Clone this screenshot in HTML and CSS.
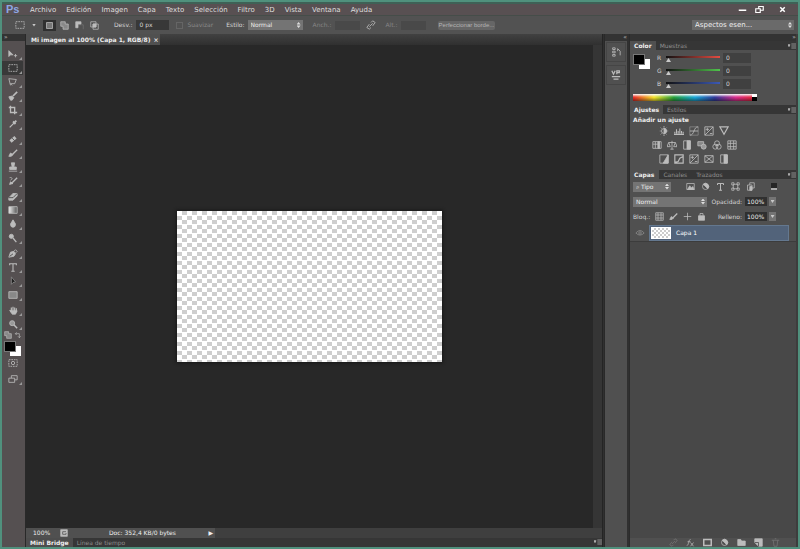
FILE: index.html
```html
<!DOCTYPE html>
<html lang="es">
<head>
<meta charset="utf-8">
<title>Mi imagen</title>
<link rel="stylesheet" href="styles.css">
</head>
<body>
<svg class="defs" aria-hidden="true">
  <symbol id="move" viewBox="0 0 12 12"><path class="f" d="M1 2v7l2-2h3z"/><path d="M7 8h4M9 6v4"/></symbol>
  <symbol id="marquee" viewBox="0 0 12 12"><path d="M1 2h10v8H1z" stroke-dasharray="2 1"/></symbol>
  <symbol id="lasso" viewBox="0 0 12 12"><path d="M3 10L1 2l9 1-2 5H3l2 2"/></symbol>
  <symbol id="wand" viewBox="0 0 12 12"><path d="M11 1L6 6" stroke-width="2"/><path class="f" d="M1 7l4-1 2 2-2 3H3z"/></symbol>
  <symbol id="crop" viewBox="0 0 12 12"><path d="M3 1v8h8M1 3h7v8" stroke-width="1.6"/></symbol>
  <symbol id="dropper" viewBox="0 0 12 12"><path d="M2 10l6-6" stroke-width="1.5"/><path d="M6 3l3 3M8 4l2-2" stroke-width="2.2"/></symbol>
  <symbol id="heal" viewBox="0 0 12 12"><path d="M3 9l6-5" stroke-width="4"/><path class="k" d="M5 5l3 3"/></symbol>
  <symbol id="brush" viewBox="0 0 12 12"><path d="M11 2L5 8" stroke-width="1.6"/><path class="f" d="M1 10l2-4 3 2-2 2z"/></symbol>
  <symbol id="stamp" viewBox="0 0 12 12"><path class="f" d="M4 1h4L7 6h3v3H2V6h3z"/><path d="M1 11h10"/></symbol>
  <symbol id="history" viewBox="0 0 12 12"><path d="M11 2L5 8" stroke-width="1.6"/><path d="M2 2c3-1 4 2 1 3M2 10l3-2"/><path class="f" d="M2 10l1-3 3 2z"/></symbol>
  <symbol id="eraser" viewBox="0 0 12 12"><path class="f" d="M1 8l5-5h5v3l-5 5H1z"/><path class="k" d="M1 8h5l5-5"/></symbol>
  <symbol id="gradient" viewBox="0 0 12 12"><path fill="url(#fade)" d="M1 2h10v8H1z"/></symbol>
  <linearGradient id="fade"><stop offset="0" stop-color="#eee"/><stop offset="1" stop-color="#555"/></linearGradient>
  <symbol id="drop" viewBox="0 0 12 12"><path class="f" d="M6 1l3 5a3 4 0 1 1-6 0z"/></symbol>
  <symbol id="dodge" viewBox="0 0 12 12"><circle class="f" cx="4" cy="4" r="2.5"/><path d="M6 6l4 5" stroke-width="1.5"/></symbol>
  <symbol id="pen" viewBox="0 0 12 12"><path class="f" d="M1 11l2-6 4-1 2 3-2 3z"/><path d="M7 4l2-2 2 2-2 2"/><path class="k" d="M2 10l4-3"/></symbol>
  <symbol id="type" viewBox="0 0 12 12"><path d="M2 4V2h8v2M6 2v9M4 11h4" stroke-width="1.3"/></symbol>
  <symbol id="arrow" viewBox="0 0 12 12"><path class="dark" d="M4 1v9l2-2 3-1z"/></symbol>
  <symbol id="rect" viewBox="0 0 12 12"><path d="M1 2h10v8H1z" fill="#888"/></symbol>
  <symbol id="hand" viewBox="0 0 12 12"><path d="M4 8V3M6 8V2M8 8V3M10 8V4M2 6l2 3" stroke-width="1.4"/><path class="f" d="M3 7h8l-2 4H5z"/></symbol>
  <symbol id="zoom" viewBox="0 0 12 12"><circle cx="5" cy="5" r="3" fill="#999"/><path d="M7 7l4 4" stroke-width="1.8"/></symbol>
  <symbol id="mask" viewBox="0 0 12 12"><path d="M1 2h10v8H1z" stroke-dasharray="2 1"/><circle cx="6" cy="6" r="2"/></symbol>
  <symbol id="screen" viewBox="0 0 12 12"><path d="M1 5h7v5H1zM4 5V2h7v5H8"/></symbol>
  <symbol id="swap" viewBox="0 0 12 12"><path d="M2 4h6v6M4 2L2 4l2 2M6 8l2 2 2-2"/></symbol>
  <symbol id="square" viewBox="0 0 12 12"><path d="M2 2h8v8H2z" fill="#777"/></symbol>
  <symbol id="unite" viewBox="0 0 12 12"><path fill="#888" d="M1 1h6v3h4v7H4V7H1z"/></symbol>
  <symbol id="subtract" viewBox="0 0 12 12"><path class="f" d="M1 1h7v3H4v5H1z"/><path d="M5 5h6v6" opacity=".3"/></symbol>
  <symbol id="intersect" viewBox="0 0 12 12"><path d="M1 1h7v7H1zM4 4h7v7H4z"/><path class="f" d="M4 4h4v4H4z"/></symbol>
  <symbol id="link" viewBox="0 0 12 12"><path d="M6 3l2-2 3 2-3 4M6 9l-2 2-3-2 3-4M4 8l4-4"/></symbol>
  <symbol id="steps" viewBox="0 0 12 12"><path d="M2 1h3v2H2zM2 5h3v2H2zM2 9h3v2H2zM8 2l3 3v5M8 2v3"/></symbol>
  <symbol id="props" viewBox="0 0 12 12"><path d="M1 1l2 4 2-4M7 5V1h3v2H7M1 8h10M3 11h6" stroke-width="1.5"/></symbol>
  <symbol id="sun" viewBox="0 0 12 12"><circle cx="6" cy="6" r="3"/><path class="f" d="M6 3a3 3 0 0 1 0 6z"/><path d="M6 0v2M6 10v2M1 6h1M10 6h1M2 2l1 1M9 2L8 3M2 10l1-1M9 10L8 9"/></symbol>
  <symbol id="levels" viewBox="0 0 12 12"><path d="M0 10h12M1 9V7M3 9V4M5 9V6M7 9V3M9 9V6M11 9V7" stroke-width="1.3"/></symbol>
  <symbol id="curves" viewBox="0 0 12 12"><path d="M1 1h10v10H1z" opacity=".5"/><path d="M1 11C7 11 5 1 11 1M1 6h10"/></symbol>
  <symbol id="exposure" viewBox="0 0 12 12"><path d="M1 1h10v10H1zM1 11L11 1M2 4h4M4 2v4M7 9h3"/></symbol>
  <symbol id="triangle" viewBox="0 0 12 12"><path d="M1 1h10L6 10z" stroke-width="1.4"/></symbol>
  <symbol id="hue" viewBox="0 0 12 12"><path d="M1 2h10v8H1zM4 2v8M1 5h6"/><path class="f" d="M7 2h2v8H7z"/></symbol>
  <symbol id="balance" viewBox="0 0 12 12"><path d="M2 3h8M6 1v10M2 3L0 8h4zM10 3L8 8h4zM4 11h4"/></symbol>
  <symbol id="bw" viewBox="0 0 12 12"><path d="M2 1h8v10H2z"/><path class="f" d="M6 1h4v10H6z"/></symbol>
  <symbol id="filter" viewBox="0 0 12 12"><path d="M1 2h7v5H1z" fill="#888"/><circle cx="8" cy="8" r="3" fill="#999"/></symbol>
  <symbol id="mixer" viewBox="0 0 12 12"><circle cx="6" cy="4" r="3"/><circle cx="4" cy="8" r="3"/><circle cx="8" cy="8" r="3"/></symbol>
  <symbol id="grid" viewBox="0 0 12 12"><path d="M1 1h10v10H1zM4 1v10M8 1v10M1 4h10M1 8h10"/></symbol>
  <symbol id="diag" viewBox="0 0 12 12"><path d="M1 1h10v10H1z"/><path class="f" d="M11 1v10H5z"/></symbol>
  <symbol id="poster" viewBox="0 0 12 12"><path d="M1 1h10v10H1zM1 10l4-1 2-4 4-2" stroke-width="1.4"/></symbol>
  <symbol id="cross" viewBox="0 0 12 12"><path d="M1 2h10v8H1zM1 2l10 8M1 10l10-8"/></symbol>
  <symbol id="pic" viewBox="0 0 12 12"><path d="M1 2h10v8H1z"/><path class="f" d="M2 10l3-5 2 3 2-2 2 4z"/></symbol>
  <symbol id="half" viewBox="0 0 12 12"><circle cx="6" cy="6" r="4"/><path class="f" d="M3 3l6 6a4 4 0 0 0-6-6z"/></symbol>
  <symbol id="shape" viewBox="0 0 12 12"><path d="M3 3h6v6H3zM1 1h3v3H1zM8 1h3v3H8zM1 8h3v3H1zM8 8h3v3H8z"/></symbol>
  <symbol id="page" viewBox="0 0 12 12"><path d="M2 4h6v7H2zM5 4V1h6v7H8"/><path class="f" d="M5 6h3v5H5z"/></symbol>
  <symbol id="lock" viewBox="0 0 12 12"><path class="f" d="M2 5h8v6H2z"/><path d="M4 5V2h4v3"/></symbol>
  <symbol id="eye" viewBox="0 0 12 12"><path d="M1 6q5-6 10 0-5 5-10 0"/><circle cx="6" cy="6" r="1.5"/></symbol>
  <symbol id="fx" viewBox="0 0 12 12"><path d="M1 10c3 0 2-8 5-8M2 5h4M6 6l4 5M10 6l-4 5"/></symbol>
  <symbol id="addmask" viewBox="0 0 12 12"><path d="M1 2h10v8H1z" stroke-width="2"/></symbol>
  <symbol id="folder" viewBox="0 0 12 12"><path class="f" d="M1 2h4l1 2h5v6H1z"/></symbol>
  <symbol id="new" viewBox="0 0 12 12"><path class="f" d="M1 1h10v10H6L1 6z"/><path class="k" d="M1 6h5v5"/></symbol>
  <symbol id="trash" viewBox="0 0 12 12"><path d="M1 3h10M3 3l1 8h4l1-8M5 1h2"/></symbol>
  <symbol id="menu" viewBox="0 0 12 12"><path class="f" d="M0 4h3L1.500 7z"/><path d="M5 3h7M5 6h7M5 9h7"/></symbol>
</svg>

<div class="app">
  <header class="menubar">
    <span class="logo">Ps</span>
    <nav class="menus">
      <button>Archivo</button><button>Edición</button><button>Imagen</button><button>Capa</button><button>Texto</button><button>Selección</button><button>Filtro</button><button>3D</button><button>Vista</button><button>Ventana</button><button>Ayuda</button>
    </nav>
    <div class="window-buttons">
      <button aria-label="Minimizar"><svg viewBox="0 0 12 12"><path d="M1 7h10" stroke-width="2"/></svg></button>
      <button aria-label="Restaurar"><svg viewBox="0 0 12 12"><path d="M1 5h6v5H1zM5 5V2h6v5H7" stroke-width="1.5"/></svg></button>
      <button aria-label="Cerrar"><svg viewBox="0 0 12 12"><path d="M3 3l6 6M9 3l-6 6" stroke-width="2"/></svg></button>
    </div>
  </header>

  <div class="options">
    <button class="preset" aria-label="Marco"><svg><use href="#marquee"/></svg><i class="caret"></i></button>
    <div class="modes">
      <button class="on" aria-label="Nueva"><svg><use href="#square"/></svg></button>
      <button aria-label="Añadir"><svg><use href="#unite"/></svg></button>
      <button aria-label="Restar"><svg><use href="#subtract"/></svg></button>
      <button aria-label="Formar intersección"><svg><use href="#intersect"/></svg></button>
    </div>
    <label class="feather">Desv.: <input value="0 px"></label>
    <label class="smooth"><input type="checkbox" disabled>Suavizar</label>
    <label class="style">Estilo: <span class="pick"><select><option>Normal</option></select></span></label>
    <label class="dim">Anch.: <input disabled></label>
    <svg class="chain"><use href="#link"/></svg>
    <label class="dim">Alt.: <input disabled></label>
    <button class="refine">Perfeccionar borde...</button>
    <span class="pick workspace"><select aria-label="Espacio de trabajo"><option>Aspectos esen...</option></select></span>
  </div>

  <div class="main">
    <aside class="toolbar">
      <div class="grip">»</div>
      <div class="tools">
        <div class="group">
          <button aria-label="Mover"><svg><use href="#move"/></svg></button>
          <button class="on" aria-label="Marco"><svg><use href="#marquee"/></svg></button>
          <button aria-label="Lazo"><svg><use href="#lasso"/></svg></button>
          <button aria-label="Selección rápida"><svg><use href="#wand"/></svg></button>
          <button aria-label="Recortar"><svg><use href="#crop"/></svg></button>
          <button aria-label="Cuentagotas"><svg><use href="#dropper"/></svg></button>
        </div>
        <div class="group">
          <button aria-label="Pincel corrector"><svg><use href="#heal"/></svg></button>
          <button aria-label="Pincel"><svg><use href="#brush"/></svg></button>
          <button aria-label="Tampón"><svg><use href="#stamp"/></svg></button>
          <button aria-label="Pincel de historia"><svg><use href="#history"/></svg></button>
        </div>
        <div class="group">
          <button aria-label="Borrador"><svg><use href="#eraser"/></svg></button>
          <button aria-label="Degradado"><svg><use href="#gradient"/></svg></button>
          <button aria-label="Desenfocar"><svg><use href="#drop"/></svg></button>
          <button aria-label="Sobreexponer"><svg><use href="#dodge"/></svg></button>
        </div>
        <div class="group">
          <button aria-label="Pluma"><svg><use href="#pen"/></svg></button>
          <button aria-label="Texto"><svg><use href="#type"/></svg></button>
          <button aria-label="Selección de trazado"><svg><use href="#arrow"/></svg></button>
          <button aria-label="Rectángulo"><svg><use href="#rect"/></svg></button>
        </div>
        <div class="group">
          <button aria-label="Mano"><svg><use href="#hand"/></svg></button>
          <button aria-label="Zoom"><svg><use href="#zoom"/></svg></button>
        </div>
      </div>
      <div class="mini"><svg><use href="#unite"/></svg><svg><use href="#swap"/></svg></div>
      <div class="swatches"><button class="back" aria-label="Color de fondo"></button><button class="front" aria-label="Color frontal"></button></div>
      <div class="modes-bottom">
        <button aria-label="Máscara rápida"><svg><use href="#mask"/></svg></button>
        <button aria-label="Modo de pantalla"><svg><use href="#screen"/></svg></button>
      </div>
    </aside>

    <section class="document">
      <div class="doc-tabs"><div class="doc-tab">Mi imagen al 100% (Capa 1, RGB/8) <button aria-label="Cerrar documento">×</button></div></div>
      <div class="view">
        <main class="pasteboard"><div class="artboard"></div></main>
        <div class="vscroll"></div>
      </div>
      <div class="status">
        <input class="percent" aria-label="Zoom" value="100%">
        <svg class="share" viewBox="0 0 12 12"><path class="f" d="M1 1h10v10H1z"/><path class="k" d="M4 4h5M4 4v4h5V6"/></svg>
        <span class="docsize">Doc: 352,4 KB/0 bytes</span>
        <button aria-label="Más información">▶</button>
        <div class="hscroll"></div>
      </div>
      <div class="bottom-tabs"><button class="active">Mini Bridge</button><button>Línea de tiempo</button><svg><use href="#menu"/></svg></div>
    </section>

    <aside class="dock">
      <div class="grip">«</div>
      <div class="dock-icons">
        <button aria-label="Historia"><svg><use href="#steps"/></svg></button>
        <button aria-label="Propiedades"><svg><use href="#props"/></svg></button>
      </div>
    </aside>

    <aside class="panels">
      <div class="grip">»</div>
      <section class="panel">
        <div class="tabs"><button class="active">Color</button><button>Muestras</button><svg><use href="#menu"/></svg></div>
        <div class="color">
          <div class="swatches"><button class="back" aria-label="Fondo"></button><button class="front" aria-label="Frontal"></button></div>
          <div class="sliders">
            <div class="channel"><label for="r">R</label><input class="red" type="range" min="0" max="255" value="0" aria-label="Rojo"><input id="r" value="0"></div>
            <div class="channel"><label for="g">G</label><input class="green" type="range" min="0" max="255" value="0" aria-label="Verde"><input id="g" value="0"></div>
            <div class="channel"><label for="b">B</label><input class="blue" type="range" min="0" max="255" value="0" aria-label="Azul"><input id="b" value="0"></div>
          </div>
        </div>
        <div class="ramp"><i></i></div>
      </section>

      <section class="panel">
        <div class="tabs"><button class="active">Ajustes</button><button>Estilos</button><svg><use href="#menu"/></svg></div>
        <div class="adjust">
          <h2>Añadir un ajuste</h2>
          <div class="icons"><svg><use href="#sun"/></svg><svg><use href="#levels"/></svg><svg><use href="#curves"/></svg><svg><use href="#exposure"/></svg><svg><use href="#triangle"/></svg></div>
          <div class="icons"><svg><use href="#hue"/></svg><svg><use href="#balance"/></svg><svg><use href="#bw"/></svg><svg><use href="#filter"/></svg><svg><use href="#mixer"/></svg><svg><use href="#grid"/></svg></div>
          <div class="icons"><svg><use href="#diag"/></svg><svg><use href="#poster"/></svg><svg><use href="#exposure"/></svg><svg><use href="#cross"/></svg><svg><use href="#bw"/></svg></div>
        </div>
      </section>

      <section class="panel layers">
        <div class="tabs"><button class="active">Capas</button><button>Canales</button><button>Trazados</button><svg><use href="#menu"/></svg></div>
        <div class="row">
          <span class="pick kind"><select aria-label="Filtro de capas"><option>⌕ Tipo</option></select></span>
          <div class="filters"><svg><use href="#pic"/></svg><svg><use href="#half"/></svg><svg><use href="#type"/></svg><svg><use href="#shape"/></svg><svg><use href="#page"/></svg></div>
          <i class="toggle"></i>
        </div>
        <div class="row">
          <span class="pick blend"><select aria-label="Modo de fusión"><option>Normal</option></select></span>
          <label class="amount">Opacidad: <input value="100%"></label><button class="drop" aria-label="Opacidad"><i class="caret"></i></button>
        </div>
        <div class="row">
          <span class="lock-label">Bloq.:</span>
          <div class="locks"><svg><use href="#grid"/></svg><svg><use href="#brush"/></svg><svg viewBox="0 0 12 12"><path d="M6 1v10M1 6h10"/></svg><svg><use href="#lock"/></svg></div>
          <label class="amount">Relleno: <input value="100%"></label><button class="drop" aria-label="Relleno"><i class="caret"></i></button>
        </div>
        <div class="layer"><button class="eye" aria-label="Visibilidad"><svg><use href="#eye"/></svg></button><div class="layer-body"><i class="thumb"></i><span>Capa 1</span></div></div>
        <div class="empty"></div>
        <div class="layer-actions"><svg class="off"><use href="#link"/></svg><svg><use href="#fx"/></svg><svg><use href="#addmask"/></svg><svg><use href="#half"/></svg><svg><use href="#folder"/></svg><svg><use href="#new"/></svg><svg class="off"><use href="#trash"/></svg></div>
      </section>
    </aside>
  </div>
</div>
</body>
</html>
```
FILE: styles.css
```css
* { box-sizing: border-box; }

html, body { height: 100%; margin: 0; }

body {
  font: 7px/10px "DejaVu Sans", sans-serif;
  color: #d6d6d6;
  background: #4f9480;
}

button, input, select {
  margin: 0;
  padding: 0;
  border: 0;
  border-radius: 0;
  background: none;
  color: inherit;
  font: inherit;
}

svg {
  display: block;
  flex: none;
  width: 10px;
  height: 10px;
  fill: none;
  stroke: #bcbcbc;
  stroke-width: 1;
}

.defs { position: absolute; width: 0; height: 0; }
.f { fill: #bcbcbc; }
.dark { fill: #222; stroke: #888; }
.k { stroke: #444; }

.app {
  display: flex;
  flex-direction: column;
  height: 100vh;
  border: 2px solid #50917d;
  background: #505050;
}

/* Menu bar */
.menubar {
  display: flex;
  flex: none;
  align-items: center;
  height: 13px;
  padding: 0 11px 0 4px;
  border-top: 2px solid #3f6156;
  background: #585052;
}

.logo {
  width: 24px;
  color: #8ea6e4;
  font: bold 11px/11px "Liberation Sans", sans-serif;
}

.menus { display: flex; gap: 10px; color: #dedede; }
.window-buttons { display: flex; gap: 8px; margin-left: auto; }
.window-buttons svg { width: 9px; height: 9px; stroke: #fff; }
.window-buttons button:last-child { margin-left: 6px; }

/* Tool options */
.options {
  display: flex;
  flex: none;
  align-items: center;
  height: 19px;
  padding: 0 4px 0 13px;
  border-top: 1px solid #454d49;
  background: #525252;
  font-size: 6px;
}

.preset { display: flex; align-items: center; gap: 7px; width: 28px; }

.caret {
  width: 4px;
  height: 3px;
  background: #c8c8c8;
  clip-path: polygon(0 0, 100% 0, 50% 100%);
}

.modes { display: flex; gap: 2px; }
.modes button { padding: 1px 2px; }
.modes svg { width: 9px; height: 9px; }
.modes .on { background: #303030; }
.feather { display: flex; gap: 4px; margin-left: 13px; }

.feather input {
  width: 33px;
  height: 10px;
  padding-left: 3px;
  background: #383838;
}

.smooth { display: flex; align-items: center; gap: 4px; margin-left: 7px; color: #898989; }

.smooth input {
  appearance: none;
  width: 7px;
  height: 7px;
  border: 1px solid #656565;
}

.style { display: flex; align-items: center; gap: 3px; margin-left: 13px; }

.pick { position: relative; display: flex; height: 10px; }

.pick select {
  appearance: none;
  width: 100%;
  padding: 0 8px 0 3px;
  background: #747474;
  color: #eee;
}

.pick::after {
  content: "";
  position: absolute;
  top: 2px;
  right: 2px;
  width: 4px;
  height: 6px;
  background: #ddd;
  clip-path: polygon(50% 0, 100% 40%, 0 40%, 0 60%, 100% 60%, 50% 100%, 0 60%, 0 40%);
}

.style .pick { width: 55px; }
.dim { display: flex; align-items: center; gap: 3px; margin-left: 10px; color: #858585; }
.dim input { width: 25px; height: 9px; background: #494949; }
.chain { margin-left: 6px; }

.refine {
  height: 9px;
  margin-left: 12px;
  padding: 0 1px;
  border-radius: 2px;
  background: #666;
  color: #b4b4b4;
  font-family: "Liberation Sans", sans-serif;
  line-height: 9px;
}

.workspace { width: 102px; margin-left: auto; font-size: 7px; }
.workspace select { background: #6a6a6a; }

/* Main area */
.main { display: flex; flex: 1; min-height: 0; background: #303030; }

.grip {
  flex: none;
  height: 7px;
  background: #333;
  color: #ccc;
  font-size: 6px;
  line-height: 6px;
  text-align: right;
}

.toolbar {
  display: flex;
  flex: none;
  flex-direction: column;
  width: 24px;
  padding-right: 2px;
  border-right: 1px solid #292929;
  background: #555051;
}

.toolbar .grip { margin-right: -2px; padding-left: 2px; text-align: left; }
.tools { display: flex; flex-direction: column; gap: 1px; margin-top: 6px; }

.group button, .modes-bottom button {
  position: relative;
  display: flex;
  align-items: center;
  width: 100%;
  height: 14px;
  padding-left: 6px;
}

.group button::after, .modes-bottom button:last-child::after {
  content: "";
  position: absolute;
  right: 1px;
  bottom: 1px;
  width: 3px;
  height: 3px;
  background: #999;
  clip-path: polygon(100% 0, 100% 100%, 0 100%);
}

.group .on { background: #393939; }
.mini { display: flex; gap: 2px; padding-left: 2px; }
.mini svg { width: 8px; height: 8px; }

.swatches {
  display: grid;
  grid-template-columns: 6px 6px 5px;
  grid-template-rows: 5px 6px 4px;
  flex: none;
  margin: 2px 0 0 2px;
}

.front { grid-area: 1 / 1 / 3 / 3; border: 1px solid #777; background: #000; }
.back { grid-area: 2 / 2 / 4 / 4; background: #fff; }
.modes-bottom { display: grid; gap: 2px; }

/* Document window */
.document { display: flex; flex: 1; flex-direction: column; min-width: 0; border-right: 1px solid #242424; }

.doc-tabs {
  display: flex;
  flex: none;
  height: 11px;
  background: linear-gradient(#414141, #303030);
}

.doc-tab {
  display: flex;
  gap: 3px;
  align-items: center;
  padding: 0 2px 0 5px;
  background: #505050;
  color: #eee;
  font-weight: bold;
  font-size: 6px;
}

.view { display: flex; flex: 1; min-height: 0; }

.pasteboard {
  display: flex;
  flex: 1;
  align-items: center;
  justify-content: center;
  background: #282828;
}

.artboard {
  width: 265px;
  height: 151px;
  background: repeating-conic-gradient(#cecece 0 25%, #fff 0 50%) 0 0 / 10px 9px;
  box-shadow: 0 0 3px 1px #181818;
}

.vscroll { width: 9px; background: #353535; }

.status {
  display: flex;
  flex: none;
  align-items: center;
  height: 10px;
  padding-left: 7px;
  background: #505050;
  color: #eee;
  font-size: 6px;
}

.percent { width: 27px; }
.share { width: 8px; height: 8px; }
.docsize { margin-left: 41px; }
.status button { margin-left: auto; }
.hscroll { width: 68%; height: 10px; margin-left: 2px; background: #3f3f3f; }

.bottom-tabs {
  display: flex;
  flex: none;
  height: 9px;
  background: #363636;
}

.bottom-tabs button { padding: 0 4px; color: #8d8d8d; font-size: 6px; line-height: 9px; }
.bottom-tabs .active { background: #4d4d4d; color: #eee; font-weight: bold; }
.bottom-tabs svg, .tabs svg { width: 8px; height: 8px; margin-left: auto; }

/* Collapsed dock */
.dock {
  display: flex;
  flex: none;
  flex-direction: column;
  width: 25px;
  margin-left: 1px;
  border-left: 1px solid #292929;
  border-right: 2px solid #303030;
  background: #505050;
}

.dock-icons { display: grid; gap: 3px; padding: 1px; }
.dock-icons button { display: grid; place-items: center; height: 20px; border: 1px solid #454545; }

/* Panels */
.panels {
  display: flex;
  flex: none;
  flex-direction: column;
  width: 169px;
  padding-right: 2px;
  border-left: 1px solid #2b2b2b;
  background: #3d3d3d;
}

.panel { flex: none; background: #505050; }
.tabs { display: flex; align-items: center; height: 9px; background: #363636; }
.tabs button { padding: 0 4px; color: #909090; font-size: 6px; line-height: 9px; }
.tabs .active { background: #505050; color: #eee; font-weight: bold; }

.color { display: flex; gap: 7px; padding: 3px 0 0 3px; }
.color .swatches { margin: 1px 0 0; }
.sliders { display: grid; flex: 1; gap: 3px; }
.channel { display: flex; align-items: center; height: 10px; font-size: 6px; }
.channel label { width: 9px; }

.channel input[type="range"] {
  appearance: none;
  width: 54px;
  height: 9px;
  background: linear-gradient(90deg, #111, var(--tone)) 0 2px / 100% 2px no-repeat;
}

.channel input[type="range"]::-webkit-slider-thumb {
  appearance: none;
  width: 5px;
  height: 4px;
  margin-top: 4px;
  background: #c8c8c8;
  clip-path: polygon(50% 0, 100% 100%, 0 100%);
}

.red { --tone: #e34c42; }
.green { --tone: #50c34c; }
.blue { --tone: #3c59b5; }

.channel input:last-child {
  width: 28px;
  height: 10px;
  margin-left: 3px;
  padding-left: 3px;
  background: #404040;
}

.ramp {
  display: flex;
  width: 124px;
  height: 7px;
  margin: 5px 0 4px 3px;
  background:
    linear-gradient(transparent 50%, rgb(0 0 0 / 45%)),
    linear-gradient(#fff, transparent 45%),
    linear-gradient(90deg, #e82828, #f4e22a 17%, #26a03b 33%, #18a5d6 50%, #313a9a 66%, #da2d8c 83%, #e82828);
}

.ramp i {
  width: 5px;
  margin-left: auto;
  background: linear-gradient(#fff 50%, #000 50%);
}

.adjust { padding: 1px 3px 2px; }
.adjust h2 { margin: 0 0 1px; color: #eee; font-size: 6px; line-height: 10px; }
.icons { display: flex; justify-content: center; gap: 5px; height: 14px; padding-right: 38px; }

.layers { display: flex; flex: 1; flex-direction: column; min-height: 0; }
.layers .tabs button { padding-right: 5px; }
.row { display: flex; flex: none; align-items: center; height: 15px; padding-left: 3px; }
.row .pick { font-size: 6px; }
.kind { width: 38px; }
.filters { display: flex; gap: 6px; margin-left: 15px; }
.filters svg, .locks svg { width: 9px; height: 9px; }

.toggle {
  width: 6px;
  height: 7px;
  margin-left: 16px;
  border-bottom: 2px solid #aaa;
  background: #252525;
}

.blend { width: 74px; }

.amount {
  display: flex;
  align-items: center;
  justify-content: flex-end;
  gap: 3px;
  width: 60px;
  font-size: 6px;
  white-space: nowrap;
}

.amount input {
  width: 22px;
  height: 9px;
  padding-left: 2px;
  background: #303030;
  color: #eee;
}

.drop {
  display: grid;
  place-items: center;
  width: 7px;
  height: 9px;
  margin-left: 2px;
  background: #747474;
}

.lock-label { width: 18px; font-size: 6px; }
.locks { display: flex; gap: 5px; width: 52px; margin: 0 0 0 4px; }

.layer { display: flex; flex: none; height: 16px; margin-top: 1px; }
.eye { display: grid; place-items: center; width: 19px; }
.eye svg { stroke: #888; }

.layer-body {
  display: flex;
  flex: 1;
  align-items: center;
  gap: 5px;
  margin-right: 7px;
  padding-left: 1px;
  border: 1px solid #64788f;
  background: #52637a;
  color: #fff;
  font-size: 6px;
}

.thumb {
  width: 20px;
  height: 12px;
  border: 1px solid #fff;
  background: repeating-conic-gradient(#ccc 0 25%, #fff 0 50%) 0 0 / 4px 4px;
}

.empty { flex: 1; border-top: 1px solid #3c3c3c; background: #484848; }

.layer-actions {
  display: flex;
  flex: none;
  justify-content: flex-end;
  gap: 8px;
  height: 9px;
  padding-right: 16px;
  background: #505050;
}

.layer-actions svg { width: 9px; height: 9px; }
.off { opacity: .35; }
```
